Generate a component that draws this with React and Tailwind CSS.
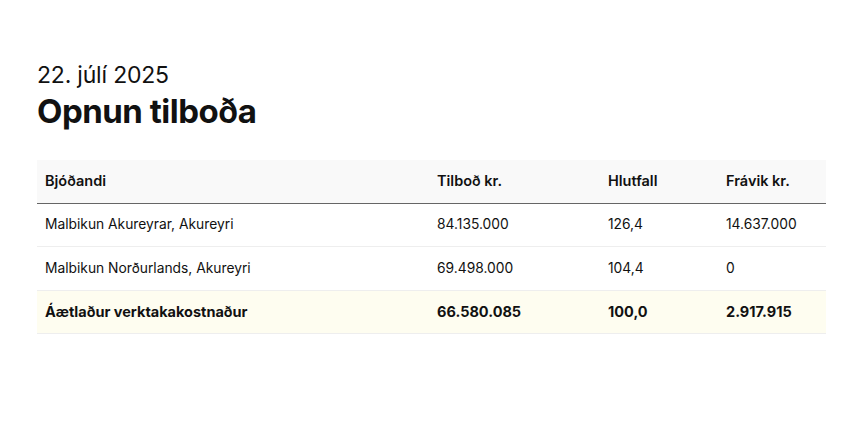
import React from "react";

const rows = [
  { name: "Malbikun Akureyrar, Akureyri", bid: "84.135.000", ratio: "126,4", diff: "14.637.000" },
  { name: "Malbikun Norðurlands, Akureyri", bid: "69.498.000", ratio: "104,4", diff: "0" },
];

const App = () => {
  return (
    <div className="min-h-screen bg-white px-[37px] pt-[60px] text-[#111] font-['Inter',sans-serif]">
      <p className="text-[23px] leading-[30px] tracking-[-0.2px]">22. júlí 2025</p>
      <h1 className="text-[33px] font-bold leading-[40px] tracking-[-0.5px] mt-[1px]">Opnun tilboða</h1>

      <table className="mt-[29px] w-[789px] border-collapse text-[13.8px] text-left">
        <thead>
          <tr className="bg-[#f9f9f9] border-b-[1.5px] border-[#666] text-[14.5px]">
            <th className="w-[392px] h-[43px] px-2 font-semibold">Bjóðandi</th>
            <th className="w-[171px] px-2 font-semibold">Tilboð kr.</th>
            <th className="w-[118px] px-2 font-semibold">Hlutfall</th>
            <th className="px-2 font-semibold">Frávik kr.</th>
          </tr>
        </thead>
        <tbody>
          {rows.map((r) => (
            <tr key={r.name} className="border-b border-[#eee]">
              <td className="h-[43.5px] px-2">{r.name}</td>
              <td className="px-2">{r.bid}</td>
              <td className="px-2">{r.ratio}</td>
              <td className="px-2">{r.diff}</td>
            </tr>
          ))}
          <tr className="bg-[#fefdf0] border-b border-[#eee] font-bold text-[14.5px]">
            <td className="h-[43px] px-2">Áætlaður verktakakostnaður</td>
            <td className="px-2">66.580.085</td>
            <td className="px-2">100,0</td>
            <td className="px-2">2.917.915</td>
          </tr>
        </tbody>
      </table>
    </div>
  );
};

export default App;
